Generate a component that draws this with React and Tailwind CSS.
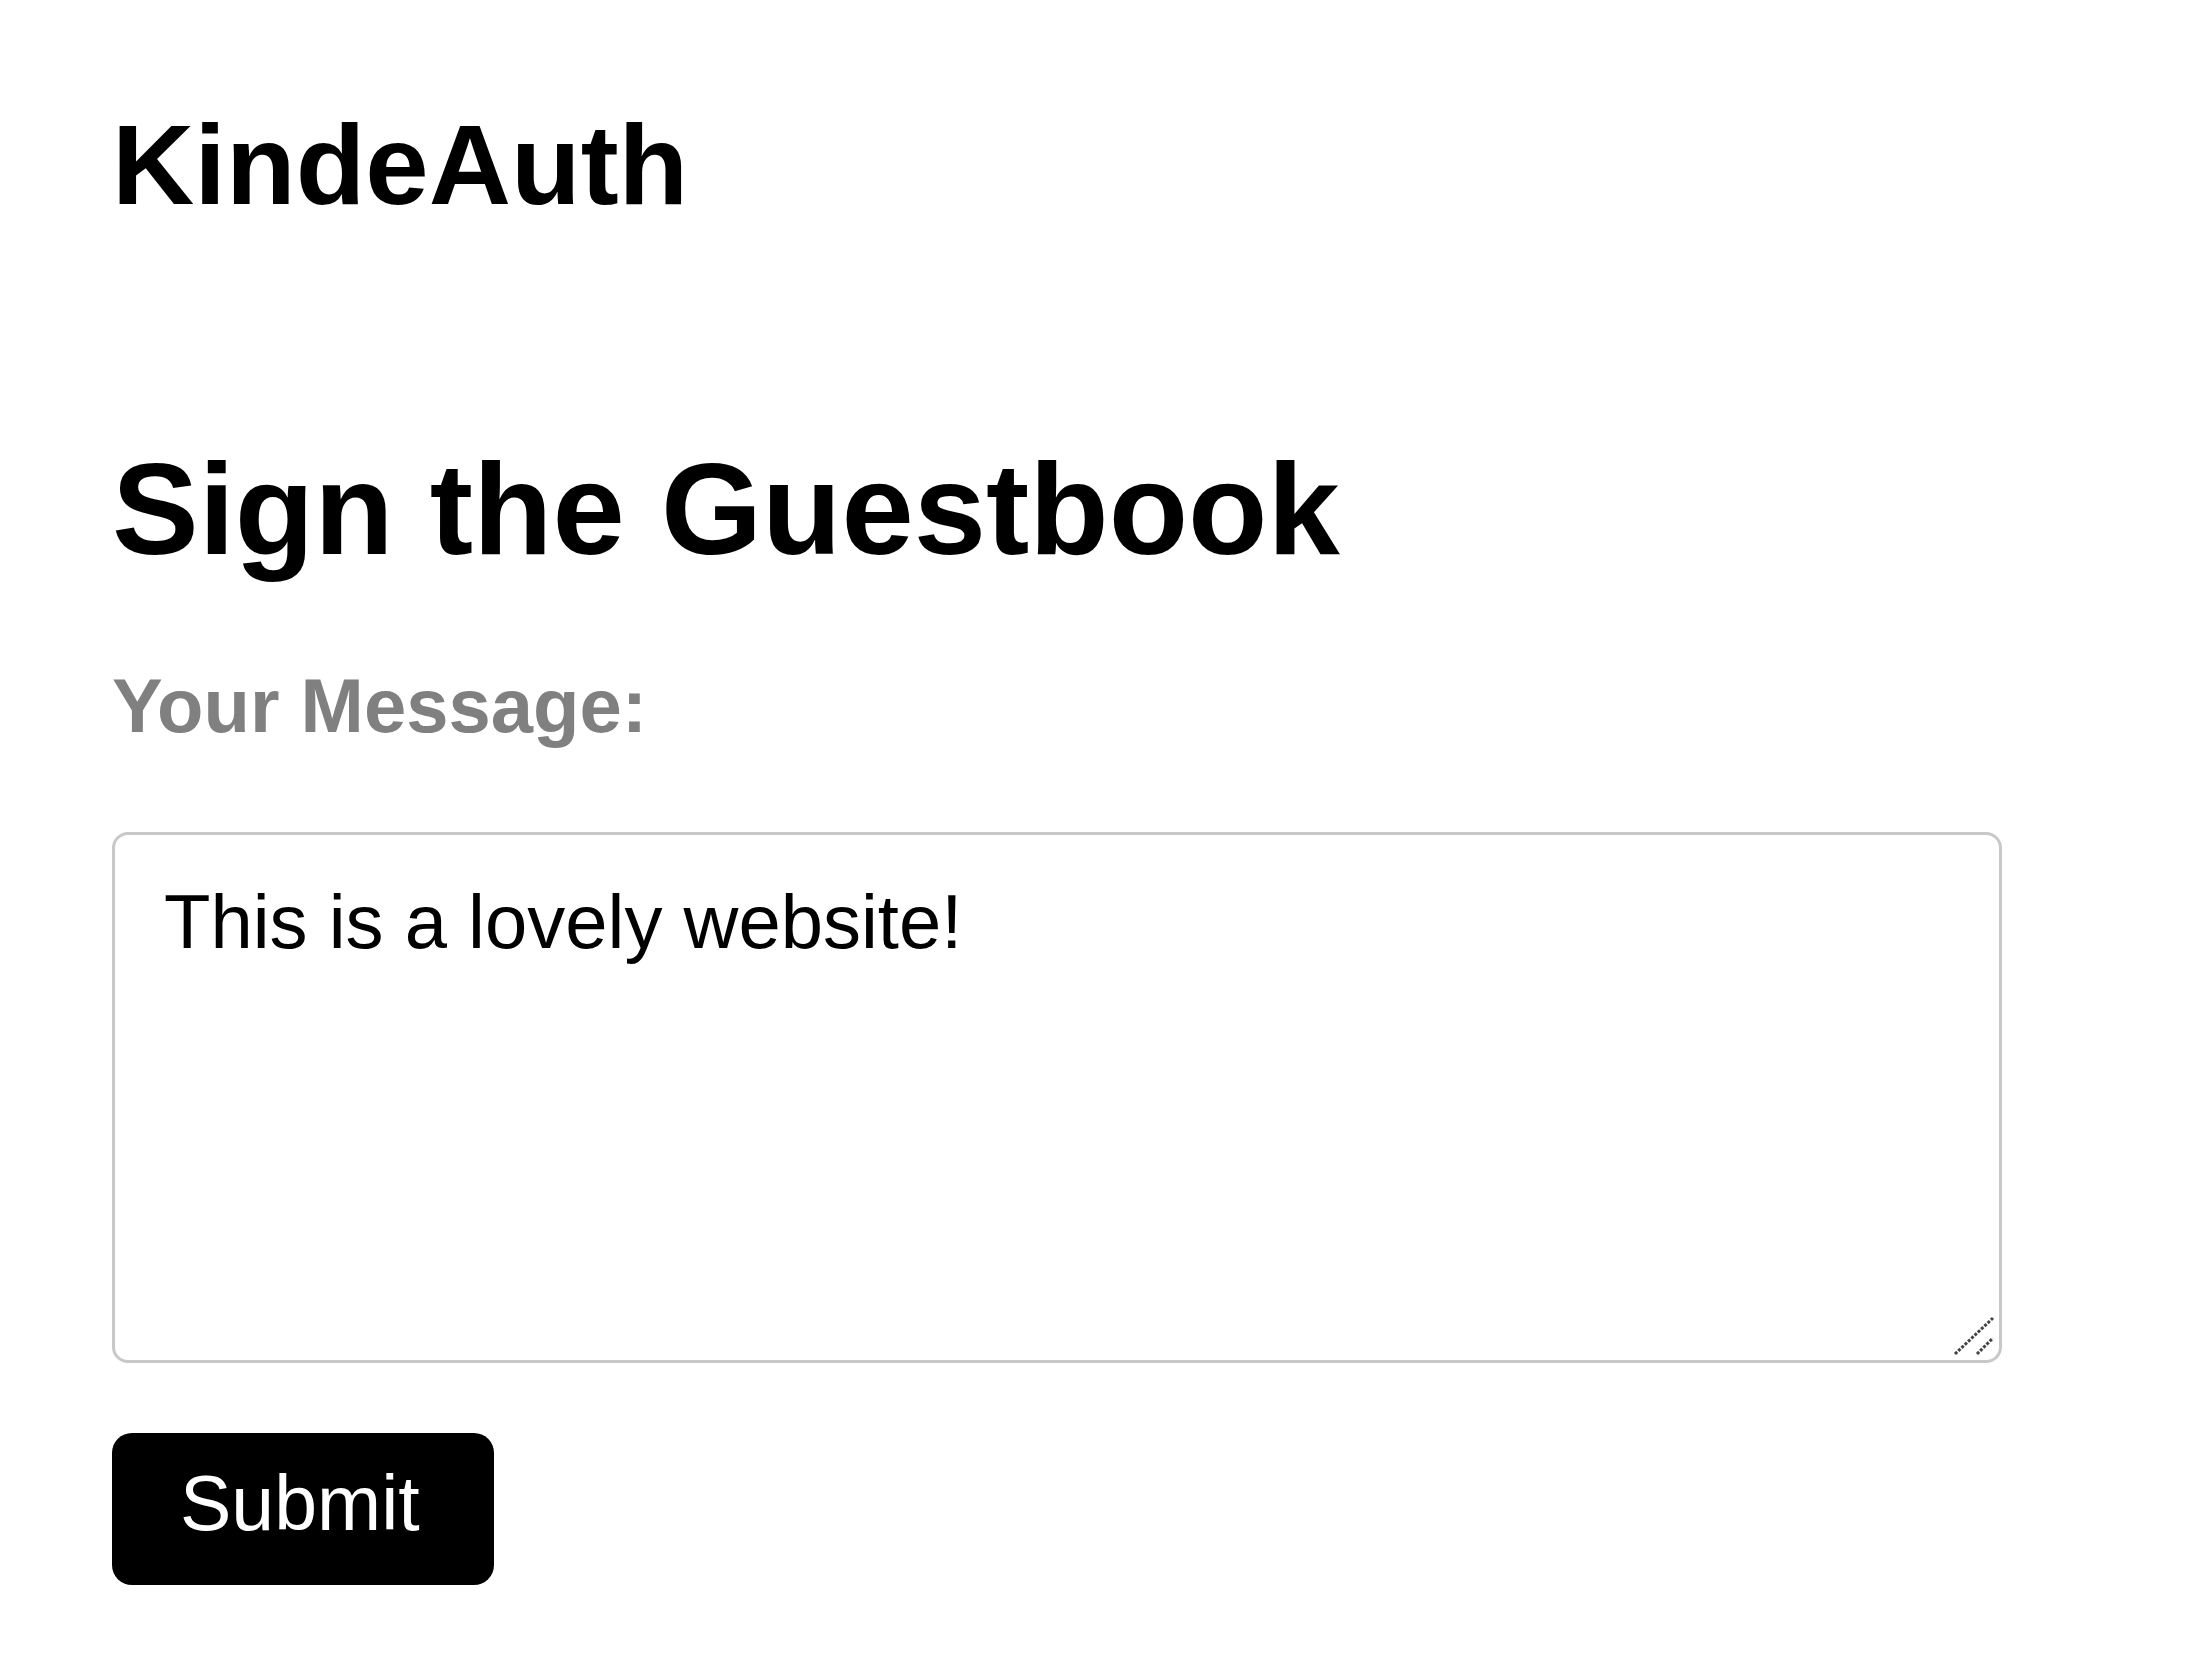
import React, { useState } from 'react';

export default function App() {
  const [message, setMessage] = useState('This is a lovely website!');

  const onSubmit = (e) => {
    e.preventDefault();
  };

  return (
    <div className="min-h-screen bg-white pl-[112px] pt-[108px] text-black" style={{ fontFamily: '"Liberation Sans", Arial, sans-serif' }}>
      <h1 className="text-[114px] leading-[114px] font-bold">KindeAuth</h1>

      <h2 className="mt-[222px] text-[130px] leading-[130px] font-bold">Sign the Guestbook</h2>

      <form onSubmit={onSubmit}>
        <label className="block mt-[94px] text-[76px] leading-[76px] font-bold text-[#808080]">Your Message:</label>

        <div className="relative mt-[88px] w-[1890px] h-[531px]">
          <textarea
            className="block w-full h-full resize-none rounded-[16px] border-[3px] border-[#c8c8c8] bg-white pt-[49px] pl-[49px] pr-[46px] text-[76px] leading-[76px] text-black outline-none"
            style={{ fontFamily: '"Liberation Sans", Arial, sans-serif' }}
            value={message}
            onChange={e => setMessage(e.target.value)}
          />
          <svg className="absolute right-0 bottom-0 pointer-events-none" width="50" height="50" viewBox="0 0 50 50">
            <line x1="3" y1="41" x2="41" y2="5" stroke="#444" strokeWidth="3" strokeDasharray="3 1.5" />
            <line x1="25" y1="41" x2="41" y2="25" stroke="#444" strokeWidth="3" strokeDasharray="3 1.5" />
          </svg>
        </div>

        <button type="submit" className="mt-[70px] block rounded-[20px] bg-black pl-[68px] pr-[74px] pt-[32px] pb-[43px] text-[77px] leading-[77px] text-white" style={{ fontFamily: '"Liberation Sans", Arial, sans-serif' }}>
          Submit
        </button>
      </form>
    </div>
  );
}
